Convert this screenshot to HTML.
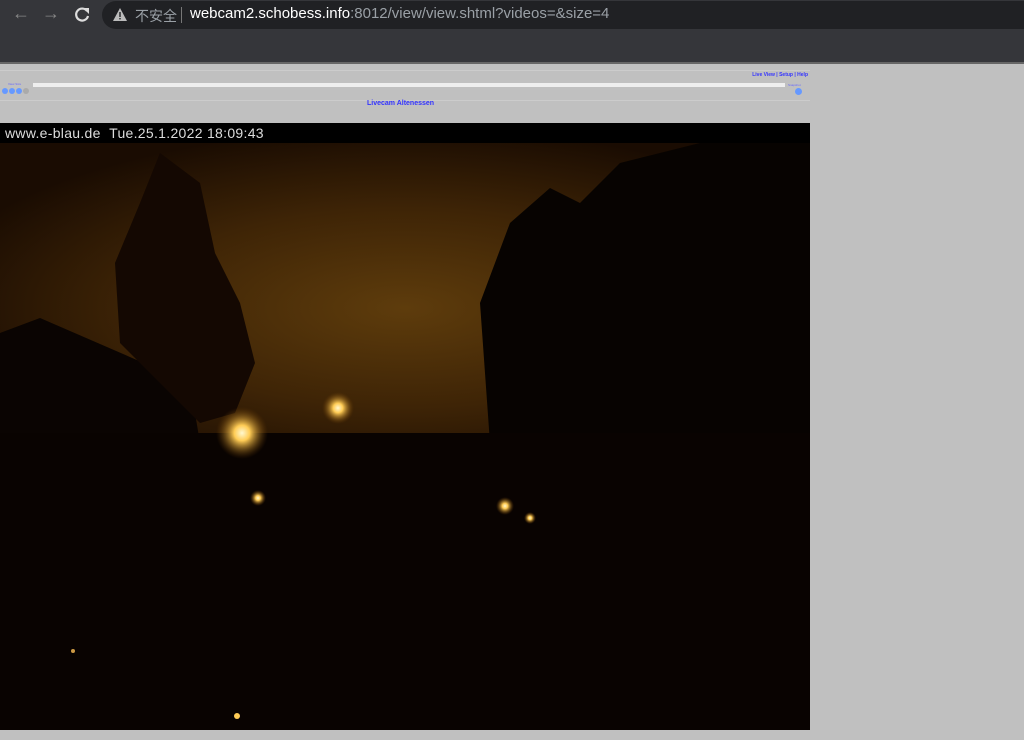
<!DOCTYPE html>
<html><head><meta charset="utf-8"><style>
*{margin:0;padding:0;box-sizing:border-box}
body{width:1024px;height:740px;overflow:hidden;background:#c0c0c0;font-family:"Liberation Sans",sans-serif;position:relative}
.top{position:absolute;left:0;top:0;width:1024px;height:62px;background:#35363a}
.omni{position:absolute;left:102px;top:1px;width:922px;height:28px;border-radius:14px 0 0 14px;background:#202124}
.url{position:absolute;left:190px;top:5px;font-size:15px;color:#9aa0a6;white-space:nowrap}
.url b{color:#fff;font-weight:normal}
.ins{position:absolute;left:135px;top:6px;font-size:14px;color:#9aa0a6;font-family:"Liberation Sans","Noto Sans CJK SC",sans-serif}
.sep{position:absolute;left:181px;top:7px;width:1px;height:16px;background:#777}
.nav{position:absolute;top:3px;font-size:18px;color:#888}
.cap{position:absolute;left:0;top:123px;width:810px;height:20px;background:#000;color:#ddd;font-size:14px;padding:2px 5px;letter-spacing:.3px}
</style></head><body>
<div class="top"></div>
<div class="nav" style="left:12px">&#8592;</div>
<div class="nav" style="left:42px">&#8594;</div>
<svg style="position:absolute;left:73px;top:6px" width="18" height="18"><path d="M14 5 A6 6 0 1 0 15 10" stroke="#ddd" stroke-width="2.2" fill="none"/><path d="M10 2 L16 2 L16 8 Z" fill="#ddd"/></svg>
<div class="omni"></div>
<svg style="position:absolute;left:112px;top:7px" width="16" height="15"><path d="M8 1 L15 14 L1 14 Z" fill="#bbb"/><rect x="7.3" y="5" width="1.4" height="5" fill="#202124"/><rect x="7.3" y="11" width="1.4" height="1.4" fill="#202124"/></svg>
<div class="ins">不安全</div><div class="sep"></div>
<div class="url"><b>webcam2.schobess.info</b>:8012/view/view.shtml?videos=&amp;size=4</div>
<div style="position:absolute;left:0;top:62px;width:1024px;height:2px;background:#666"></div>
<div style="position:absolute;left:0;top:70px;width:810px;height:12px;border-top:1px solid #ccc"></div>
<div style="position:absolute;right:216px;top:72px;font-size:5px;font-weight:bold;color:#33f">Live View | Setup | Help</div>
<div style="position:absolute;left:33px;top:83px;width:752px;height:4px;background:#eee"></div>
<div style="position:absolute;left:8px;top:82px;font-size:3px;color:#66f">View Size</div>
<div style="position:absolute;left:2px;top:88px;display:flex;gap:1px"><i style="width:6px;height:6px;border-radius:50%;background:#69f"></i><i style="width:6px;height:6px;border-radius:50%;background:#69f"></i><i style="width:6px;height:6px;border-radius:50%;background:#69f"></i><i style="width:6px;height:6px;border-radius:50%;background:#aaa"></i></div>
<div style="position:absolute;left:788px;top:83px;font-size:3px;color:#66f">Snapshot</div>
<div style="position:absolute;left:795px;top:88px;width:7px;height:7px;border-radius:50%;background:#69f"></div>
<div style="position:absolute;left:0;top:100px;width:810px;height:23px;border-top:1px solid #ccc"></div>
<div style="position:absolute;left:367px;top:100px;font-size:7px;font-weight:bold;color:#33f">Livecam Altenessen</div>
<svg style="position:absolute;left:0;top:143px" width="810" height="587">
<defs>
<radialGradient id="sky" cx="0.5" cy="0.55" r="0.6"><stop offset="0" stop-color="#5e3c0c"/><stop offset="0.55" stop-color="#3e2406"/><stop offset="1" stop-color="#1a0c02"/></radialGradient>
<radialGradient id="g" cx="0.5" cy="0.5" r="0.5"><stop offset="0" stop-color="#fff8d0"/><stop offset="0.3" stop-color="#ffcc55"/><stop offset="1" stop-color="#6a3a00" stop-opacity="0"/></radialGradient>
</defs>
<rect width="810" height="587" fill="#080301"/>
<rect width="810" height="300" fill="url(#sky)"/>
<path d="M490 300 L480 160 L510 80 L550 45 L580 60 L620 20 L700 0 L810 0 L810 300 Z" fill="#070301"/>
<path d="M0 190 L40 175 L190 240 L200 300 L0 300 Z" fill="#0a0402"/>
<path d="M160 10 L200 40 L215 110 L240 160 L255 220 L235 270 L200 280 L170 250 L120 200 L115 120 L140 60 Z" fill="#140802"/>
<rect x="0" y="290" width="810" height="297" fill="#090301"/>
<circle cx="242" cy="290" r="26" fill="url(#g)"/>
<circle cx="338" cy="265" r="16" fill="url(#g)"/>
<circle cx="258" cy="355" r="8" fill="url(#g)"/>
<circle cx="505" cy="363" r="9" fill="url(#g)"/>
<circle cx="530" cy="375" r="6" fill="url(#g)"/>
<circle cx="237" cy="573" r="3" fill="#ffcc55"/>
<circle cx="73" cy="508" r="2" fill="#cc9944"/>
</svg>
<div class="cap">www.e-blau.de&nbsp;&nbsp;Tue.25.1.2022 18:09:43</div>
</body></html>
